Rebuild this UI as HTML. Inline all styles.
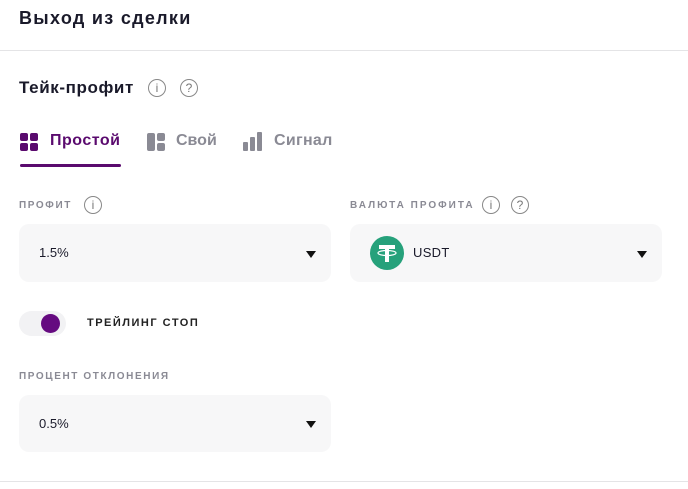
<html><head><style>
body{margin:0;width:688px;height:489px;background:#fff;font-family:"Liberation Sans",sans-serif;position:relative;overflow:hidden;color:#1a1a2a}
.a{position:absolute}
.lbl{font-size:10px;font-weight:bold;letter-spacing:1.6px;color:#8a8a94}
.box{position:absolute;background:#f7f7f8;border-radius:10px}
.ic{position:absolute;border:1.3px solid #888;border-radius:50%;width:16px;height:16px;box-sizing:border-box;font-size:12px;color:#777;text-align:center;line-height:14px}
.tri{position:absolute;width:0;height:0;border-left:5px solid transparent;border-right:5px solid transparent;border-top:7px solid #111}
</style></head><body>
<div class="a" style="left:19px;top:8px;font-size:18px;font-weight:bold;letter-spacing:1.3px">Выход из сделки</div>
<div class="a" style="left:0;top:50px;width:688px;height:1px;background:#e4e4e6"></div>
<div class="a" style="left:19px;top:78px;font-size:17px;font-weight:bold;letter-spacing:0.6px">Тейк-профит</div>
<div class="ic" style="left:148px;top:79px;width:18px;height:18px;line-height:16px">i</div>
<div class="ic" style="left:180px;top:79px;width:18px;height:18px;line-height:16px">?</div>
<svg class="a" style="left:20px;top:133px" width="18" height="18"><rect x="0" y="0" width="8" height="8" rx="2" fill="#5a0a6e"/><rect x="10" y="0" width="8" height="8" rx="2" fill="#5a0a6e"/><rect x="0" y="10" width="8" height="8" rx="2" fill="#5a0a6e"/><rect x="10" y="10" width="8" height="8" rx="2" fill="#5a0a6e"/></svg>
<div class="a" style="left:50px;top:132px;font-size:16px;font-weight:bold;color:#5a0a6e;letter-spacing:0.5px">Простой</div>
<div class="a" style="left:20px;top:164px;width:101px;height:3px;border-radius:2px;background:#5a0a6e"></div>
<svg class="a" style="left:147px;top:133px" width="18" height="18"><rect x="0" y="0" width="8" height="18" rx="2" fill="#8a8a94"/><rect x="10" y="0" width="8" height="8" rx="2" fill="#8a8a94"/><rect x="10" y="10" width="8" height="8" rx="2" fill="#8a8a94"/></svg>
<div class="a" style="left:176px;top:132px;font-size:16px;font-weight:bold;color:#8a8a94">Свой</div>
<svg class="a" style="left:243px;top:132px" width="20" height="19"><rect x="0" y="10" width="5" height="9" rx="1" fill="#8a8a94"/><rect x="7" y="5" width="5" height="14" rx="1" fill="#8a8a94"/><rect x="14" y="0" width="5" height="19" rx="1" fill="#8a8a94"/></svg>
<div class="a" style="left:274px;top:132px;font-size:16px;font-weight:bold;color:#8a8a94;letter-spacing:0.3px">Сигнал</div>
<div class="a lbl" style="left:19px;top:200px">ПРОФИТ</div>
<div class="ic" style="left:84px;top:196px;width:18px;height:18px;line-height:16px">i</div>
<div class="box" style="left:19px;top:224px;width:312px;height:58px"></div>
<div class="a" style="left:39px;top:245px;font-size:13px">1.5%</div>
<div class="tri" style="left:306px;top:251px"></div>
<div class="a lbl" style="left:350px;top:200px;letter-spacing:2px">ВАЛЮТА ПРОФИТА</div>
<div class="ic" style="left:482px;top:196px;width:18px;height:18px;line-height:16px">i</div>
<div class="ic" style="left:511px;top:196px;width:18px;height:18px;line-height:16px">?</div>
<div class="box" style="left:350px;top:224px;width:312px;height:58px"></div>
<svg class="a" style="left:370px;top:236px" width="34" height="34"><circle cx="17" cy="17" r="17" fill="#26a17b"/><rect x="9" y="9" width="16" height="4" fill="#fff"/><rect x="15" y="9" width="4" height="17" fill="#fff"/><ellipse cx="17" cy="17" rx="9" ry="2.5" fill="none" stroke="#fff" stroke-width="1.2"/></svg>
<div class="a" style="left:413px;top:245px;font-size:13px;letter-spacing:0.3px">USDT</div>
<div class="tri" style="left:637px;top:251px"></div>
<div class="a" style="left:19px;top:311px;width:47px;height:25px;border-radius:13px;background:#f2f2f4"></div>
<div class="a" style="left:41px;top:314px;width:19px;height:19px;border-radius:50%;background:#650a80"></div>
<div class="a" style="left:87px;top:317px;font-size:11px;font-weight:bold;letter-spacing:1.5px;color:#222">ТРЕЙЛИНГ СТОП</div>
<div class="a lbl" style="left:19px;top:371px">ПРОЦЕНТ ОТКЛОНЕНИЯ</div>
<div class="box" style="left:19px;top:395px;width:312px;height:57px"></div>
<div class="a" style="left:39px;top:416px;font-size:13px">0.5%</div>
<div class="tri" style="left:306px;top:421px"></div>
<div class="a" style="left:0;top:481px;width:688px;height:1px;background:#e4e4e6"></div>
</body></html>
